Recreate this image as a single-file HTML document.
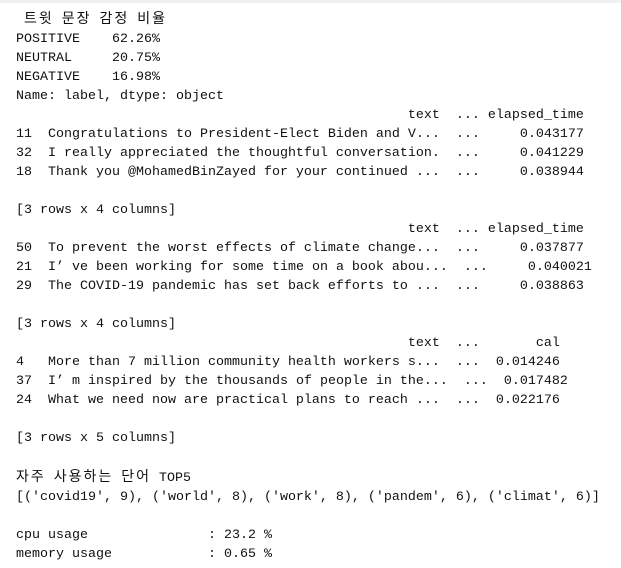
<!DOCTYPE html>
<html><head><meta charset="utf-8">
<style>
html,body{margin:0;padding:0;background:#fff;width:621px;height:568px;overflow:hidden;}
.bar{position:absolute;left:0;top:0;width:621px;height:3px;background:#f0f0f0;}
pre{position:absolute;left:16px;top:9px;margin:0;font-family:"Liberation Mono",monospace;font-size:13.33px;line-height:19px;color:#111;white-space:pre;}
.k{font-family:"Noto Sans CJK KR","NanumGothic",sans-serif;font-size:14px;letter-spacing:2px;}
.w{display:inline-block;width:16px;}
</style></head><body>
<div class="bar"></div>
<pre> <span class="k">트윗</span> <span class="k">문장</span> <span class="k">감정</span> <span class="k">비율</span>
POSITIVE    62.26%
NEUTRAL     20.75%
NEGATIVE    16.98%
Name: label, dtype: object
                                                 text  ... elapsed_time
11  Congratulations to President-Elect Biden and V...  ...     0.043177
32  I really appreciated the thoughtful conversation.  ...     0.041229
18  Thank you @MohamedBinZayed for your continued ...  ...     0.038944

[3 rows x 4 columns]
                                                 text  ... elapsed_time
50  To prevent the worst effects of climate change...  ...     0.037877
21  I<span class="w">’</span>ve been working for some time on a book abou...  ...     0.040021
29  The COVID-19 pandemic has set back efforts to ...  ...     0.038863

[3 rows x 4 columns]
                                                 text  ...       cal
4   More than 7 million community health workers s...  ...  0.014246
37  I<span class="w">’</span>m inspired by the thousands of people in the...  ...  0.017482
24  What we need now are practical plans to reach ...  ...  0.022176

[3 rows x 5 columns]

<span class="k">자주</span> <span class="k">사용하는</span> <span class="k">단어</span> TOP5
[('covid19', 9), ('world', 8), ('work', 8), ('pandem', 6), ('climat', 6)]

cpu usage               : 23.2 %
memory usage            : 0.65 %
</pre>
</body></html>
